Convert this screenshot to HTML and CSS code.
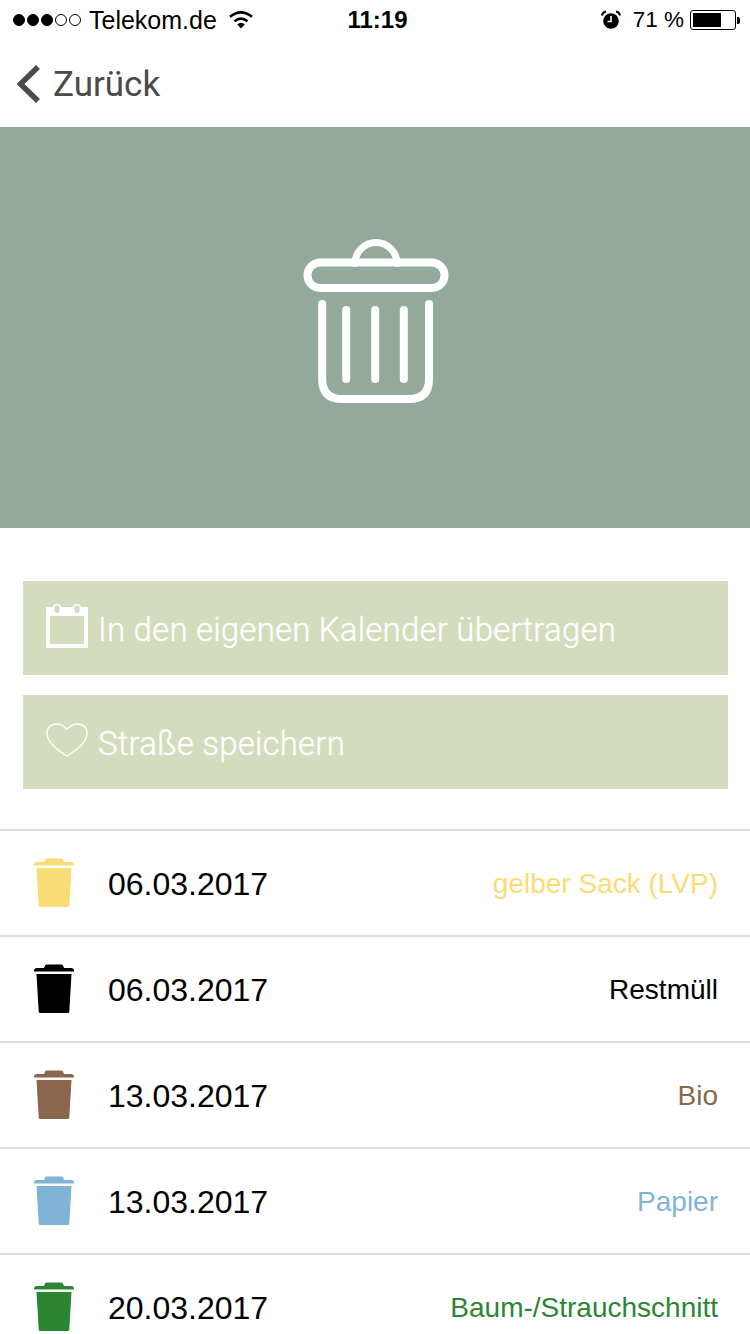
FILE: index.html
```html
<!DOCTYPE html>
<html lang="de">
<head>
<meta charset="utf-8">
<title>Abfallkalender</title>
<link rel="stylesheet" href="styles.css">
</head>
<body>
<svg class="defs" width="0" height="0" aria-hidden="true">
  <symbol id="bin" viewBox="0 0 40 49">
    <path fill="currentColor" d="M13 0.500H27Q28.500 0.500 29 1.500L30 4H37.500Q40 4.300 40 6.300V7.500H0V6.300Q0 4.300 2.500 4H10L11 1.500Q11.500 0.500 13 0.500Z"/>
    <path fill="currentColor" d="M2.500 10H37.500L35.300 47.500Q35.200 49 33.700 49H6.300Q4.800 49 4.700 47.500Z"/>
  </symbol>
</svg>
<header class="status">
  <div class="status-left">
    <span class="signal"><i class="on"></i><i class="on"></i><i class="on"></i><i></i><i></i></span>
    <span class="carrier">Telekom.de</span>
    <svg class="wifi" width="26" height="18" viewBox="0 0 26 18"><path d="M13 17.500 9.200 13.200Q13 10.200 16.800 13.200Z" fill="#000"/><path d="M6.500 10.200Q13 5 19.500 10.200" fill="none" stroke="#000" stroke-width="2.600"/><path d="M2 5.800Q13 -3 24 5.800" fill="none" stroke="#000" stroke-width="2.600"/></svg>
  </div>
  <div class="status-time">11:19</div>
  <div class="status-right">
    <svg class="alarm" width="20" height="20" viewBox="0 0 20 20"><circle cx="10" cy="11" r="7.800" fill="#000"/><path d="M10 6V11.500H6.500" fill="none" stroke="#fff" stroke-width="1.600"/><path d="M1 5.500Q1.500 2 5 1.500M19 5.500Q18.500 2 15 1.500" fill="none" stroke="#000" stroke-width="2"/></svg>
    <span class="percent">71 %</span>
    <span class="battery"><span class="battery-fill"></span></span><span class="battery-tip"></span>
  </div>
</header>
<nav class="nav">
  <svg class="chevron" width="26" height="40" viewBox="0 0 26 40"><path d="M23 3 5.500 20 23 37" fill="none" stroke="#4a4a4a" stroke-width="5.500"/></svg>
  <span class="back">Zurück</span>
</nav>
<section class="hero">
  <svg class="hero-icon" width="146" height="166" viewBox="0 0 146 166" fill="none" stroke="#fff" stroke-linecap="round">
    <path stroke-width="7" d="M52 24.500A21 21 0 0 1 94 24.500"/>
    <rect x="4.500" y="23.500" width="137" height="25.500" rx="12.750" stroke-width="8"/>
    <path stroke-width="8" d="M19.200 65V140Q19.200 160 39 160H106Q126 160 126 140V65"/>
    <path stroke-width="8" d="M43.200 71V140M72.200 71V140M100.800 71V140"/>
  </svg>
</section>
<section class="actions">
  <div class="action">
    <svg class="action-icon cal" width="42" height="44" viewBox="0 0 42 44"><path fill="#fff" fill-rule="evenodd" d="M0 3H7V3Q7 0 11 0T15 3H27Q27 0 31 0T35 3H42V44H0ZM4 12V40H38V12Z"/><path fill="#d3ddbd" d="M8.500 3Q8.500 1.500 11 1.500T13.500 3V7Q13.500 9 11 9T8.500 7ZM28.500 3Q28.500 1.500 31 1.500T33.500 3V7Q33.500 9 31 9T28.500 7Z"/></svg>
    <span class="label">In den eigenen Kalender übertragen</span>
  </div>
  <div class="action">
    <svg class="action-icon" width="42" height="34" viewBox="0 0 42 34"><path fill="none" stroke="#fff" stroke-width="1.300" d="M21 33C11 27 1 19 1 10C1 4 5.500 1 10.500 1C15 1 18.500 3.500 21 6.500C23.500 3.500 27 1 31.500 1C36.500 1 41 4 41 10C41 19 31 27 21 33Z"/></svg>
    <span class="label">Straße speichern</span>
  </div>
</section>
<ul class="list">
  <li class="row yellow"><svg class="bin" width="40" height="49"><use href="#bin"/></svg><span class="date">06.03.2017</span><span class="type">gelber Sack (LVP)</span></li>
  <li class="row black"><svg class="bin" width="40" height="49"><use href="#bin"/></svg><span class="date">06.03.2017</span><span class="type">Restmüll</span></li>
  <li class="row brown"><svg class="bin" width="40" height="49"><use href="#bin"/></svg><span class="date">13.03.2017</span><span class="type">Bio</span></li>
  <li class="row blue"><svg class="bin" width="40" height="49"><use href="#bin"/></svg><span class="date">13.03.2017</span><span class="type">Papier</span></li>
  <li class="row green"><svg class="bin" width="40" height="49"><use href="#bin"/></svg><span class="date">20.03.2017</span><span class="type">Baum-/Strauchschnitt</span></li>
</ul>
</body>
</html>
```
FILE: styles.css
```css
* { box-sizing: border-box; }
html, body { margin: 0; padding: 0; height: 1334px; overflow: hidden; background: #fff; }
body { font-family: "Liberation Sans", Arial, sans-serif; color: #000; }
.defs { position: absolute; }

.status { height: 40px; display: grid; grid-template-columns: 1fr auto 1fr; align-items: center; padding: 0 10px 0 13px; font-size: 25px; }
.status-left { display: flex; align-items: center; }
.signal { display: flex; gap: 2px; margin-right: 8px; }
.signal i { width: 12px; height: 12px; border-radius: 50%; border: 1px solid #000; }
.signal i.on { background: #000; }
.wifi { margin-left: 11px; }
.status-time { font-weight: 700; font-size: 24px; padding-left: 2px; }
.status-right { display: flex; align-items: center; justify-content: flex-end; }
.alarm { margin-right: 12px; }
.percent { margin-right: 6px; font-size: 22.500px; }
.battery { width: 46px; height: 20px; border: 1.500px solid #000; border-radius: 3px; padding: 2px; display: flex; }
.battery-fill { width: 70%; background: #000; }
.battery-tip { width: 3px; height: 7px; background: #000; border-radius: 0 2px 2px 0; margin-left: 1px; }

.nav { height: 87px; display: flex; align-items: center; padding-left: 15px; color: #4a4a4a; }
.chevron { margin-right: 12px; }
.back { font-family: Roboto, sans-serif; font-size: 35px; font-weight: 400; margin-top: 2px; }

.hero { height: 401px; background: #93a99c; display: flex; align-items: center; justify-content: center; }
.hero-icon { margin-bottom: 12px; margin-left: 2px; }

.actions { padding: 53px 22px 40px 23px; display: flex; flex-direction: column; gap: 20px; }
.action { height: 94px; background: #d3ddbd; color: #fff; display: flex; align-items: center; padding-left: 23px; font-family: Roboto, sans-serif; font-size: 33px; font-weight: 300; gap: 10px; }
.action-icon { flex: none; margin-bottom: 4px; }
.label { margin-top: 2px; letter-spacing: 0.2px; -webkit-text-stroke: 0.3px #fff; }

.list { list-style: none; margin: 0; padding: 0; }
.row { height: 106px; border-top: 2px solid #dcdcdc; display: flex; align-items: center; padding: 0 32px 0 34px; font-size: 32px; }
.bin { flex: none; margin-right: 34px; margin-top: -2px; }
.date { color: #000; margin-top: 2px; }
.type { margin-left: auto; font-size: 28px; margin-top: 2px; }
.yellow .bin, .yellow .type { color: #f9dc75; }
.black .bin, .black .type { color: #000; }
.brown .bin, .brown .type { color: #8a674c; }
.blue .bin, .blue .type { color: #80b4d6; }
.green .bin, .green .type { color: #2c8533; }
```
